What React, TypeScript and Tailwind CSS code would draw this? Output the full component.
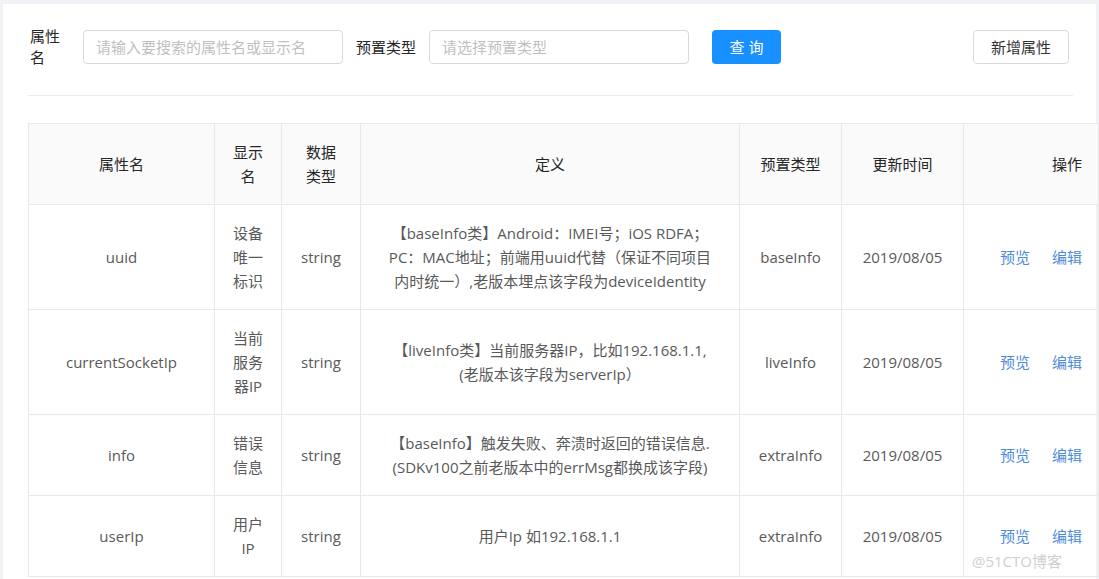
import React from 'react'

type Row = {
  name: string
  display: string[]
  type: string
  definition: string[]
  preset: string
  updated: string
}

const rows: Row[] = [
  {
    name: 'uuid',
    display: ['设备', '唯一', '标识'],
    type: 'string',
    definition: [
      '【baseInfo类】Android：IMEI号；iOS RDFA；',
      'PC：MAC地址；前端用uuid代替（保证不同项目',
      '内时统一）,老版本埋点该字段为deviceIdentity',
    ],
    preset: 'baseInfo',
    updated: '2019/08/05',
  },
  {
    name: 'currentSocketIp',
    display: ['当前', '服务', '器IP'],
    type: 'string',
    definition: ['【liveInfo类】当前服务器IP，比如192.168.1.1,', '(老版本该字段为serverIp）'],
    preset: 'liveInfo',
    updated: '2019/08/05',
  },
  {
    name: 'info',
    display: ['错误', '信息'],
    type: 'string',
    definition: ['【baseInfo】触发失败、奔溃时返回的错误信息.', '(SDKv100之前老版本中的errMsg都换成该字段)'],
    preset: 'extraInfo',
    updated: '2019/08/05',
  },
  {
    name: 'userIp',
    display: ['用户', 'IP'],
    type: 'string',
    definition: ['用户Ip 如192.168.1.1'],
    preset: 'extraInfo',
    updated: '2019/08/05',
  },
]

function Lines({ lines }: { lines: string[] }) {
  return (
    <>
      {lines.map((l, i) => (
        <div key={i} className="whitespace-nowrap">
          {l}
        </div>
      ))}
    </>
  )
}

export default function App() {
  return (
    <div
      className="relative h-[579px] overflow-hidden bg-[#f0f2f5] pt-1 px-[3px] text-[15px] leading-6"
      style={{ fontFamily: '"Open Sans", "Noto Sans CJK SC", sans-serif' }}
    >
      <div className="bg-white h-full pl-[25px] pr-[23px] pt-[22px]">
        {/* Filter bar */}
        <div className="flex items-center">
          <label className="w-[32px] ml-[2px] leading-[21px] text-[#262626]">属性名</label>
          <input
            className="ml-[21px] w-[260px] h-[34px] rounded border border-[#d9d9d9] px-3 text-[15px] placeholder:text-[#bfbfbf] outline-none"
            placeholder="请输入要搜索的属性名或显示名"
          />
          <label className="ml-[13px] text-[#262626]">预置类型</label>
          <input
            className="ml-[13px] w-[260px] h-[34px] rounded border border-[#d9d9d9] px-3 text-[15px] placeholder:text-[#bfbfbf] outline-none"
            placeholder="请选择预置类型"
          />
          <button className="ml-[23px] w-[69px] h-[34px] rounded bg-[#1890ff] text-white text-[15px] tracking-[4px] pl-1">
            查询
          </button>
          <div className="flex-1" />
          <button className="mr-[4px] w-[96px] h-[34px] rounded border border-[#d9d9d9] bg-white text-[#333] text-[15px]">
            新增属性
          </button>
        </div>

        {/* Divider */}
        <div className="mt-[27px] h-px bg-[#ececec]" />

        {/* Table */}
        <table className="mt-[27px] w-[1070px] table-fixed border-collapse text-center text-[#595959]">
          <colgroup>
            <col className="w-[186px]" />
            <col className="w-[67px]" />
            <col className="w-[79px]" />
            <col className="w-[379px]" />
            <col className="w-[102px]" />
            <col className="w-[122px]" />
            <col className="w-[135px]" />
          </colgroup>
          <thead>
            <tr className="bg-[#fafafa] text-[#262626]">
              <th className="border border-[#e8e8e8] py-4 font-normal">属性名</th>
              <th className="border border-[#e8e8e8] py-4 font-normal">
                <Lines lines={['显示', '名']} />
              </th>
              <th className="border border-[#e8e8e8] py-4 font-normal">
                <Lines lines={['数据', '类型']} />
              </th>
              <th className="border border-[#e8e8e8] py-4 font-normal">定义</th>
              <th className="border border-[#e8e8e8] py-4 font-normal">预置类型</th>
              <th className="border border-[#e8e8e8] py-4 font-normal">更新时间</th>
              <th className="border border-[#e8e8e8] py-4 pr-[16px] font-normal text-right">操作</th>
            </tr>
          </thead>
          <tbody>
            {rows.map((r) => (
              <tr key={r.name}>
                <td className="border border-[#e8e8e8] py-4">{r.name}</td>
                <td className="border border-[#e8e8e8] py-4">
                  <Lines lines={r.display} />
                </td>
                <td className="border border-[#e8e8e8] py-4">{r.type}</td>
                <td className="border border-[#e8e8e8] py-4">
                  <Lines lines={r.definition} />
                </td>
                <td className="border border-[#e8e8e8] py-4">{r.preset}</td>
                <td className="border border-[#e8e8e8] py-4">{r.updated}</td>
                <td className="border border-[#e8e8e8] py-4 pr-[16px] text-right">
                  <a className="text-[#4f8ad8] cursor-pointer">预览</a>
                  <a className="ml-[22px] text-[#4f8ad8] cursor-pointer">编辑</a>
                </td>
              </tr>
            ))}
          </tbody>
        </table>
      </div>

      {/* Watermark */}
      <div className="absolute right-[37px] bottom-[8px] text-[15px] leading-5 text-[#cfcfcf] [text-shadow:0_0_2px_white]">
        @51CTO博客
      </div>
    </div>
  )
}
